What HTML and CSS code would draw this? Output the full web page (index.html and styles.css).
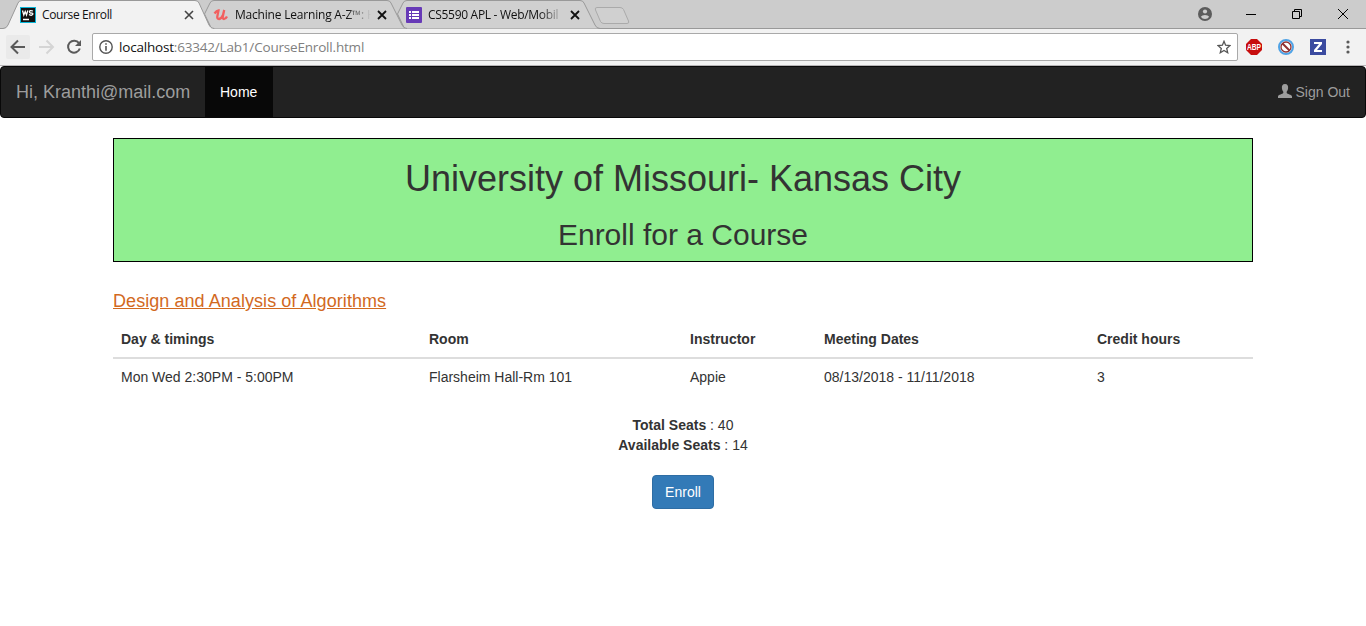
FILE: index.html
```html
<!DOCTYPE html>
<html lang="en">
<head>
<meta charset="utf-8">
<title>Course Enroll</title>
<link rel="stylesheet" href="styles.css">
</head>
<body>
<header class="browser">
  <div class="tabstrip">
    <svg class="tab-shapes" width="1366" height="29" viewBox="0 0 1366 29">
      <path class="strip-line" d="M0 28.5H1366"/>
      <path class="tab-back" d="M404.500 28.500L397.500 14L403 3Q404 .5 407 .5H580Q583 .5 584 3L595 25Q596.500 28.500 600 28.500"/>
      <path class="tab-back" d="M211.500 28.500L204.500 14L210 3Q211 .5 214 .5H387Q390 .5 391 3L402 25Q403.500 28.500 407 28.500"/>
      <path class="tab-front" d="M0 28.500H3Q6.500 28.500 8 25L18 3Q19 .5 22 .5H195Q198 .5 199 3L209 25Q210.500 28.500 214 28.500V30H0Z"/>
      <path class="tab-cover" d="M7 28.500H211"/>
      <path class="new-tab" d="M597 7.500H620Q622.500 7.500 623.500 9.500L628.500 21Q629.500 23.500 627 23.500H604Q601.500 23.500 600.500 21.500L595.500 10Q594.500 7.500 597 7.500Z"/>
    </svg>
    <div class="tab">
      <svg class="favicon" width="16" height="16" viewBox="0 0 16 16"><rect width="16" height="16" fill="#08b5d7"/><rect x="1" y="1" width="14" height="14" fill="#111"/><path d="M2.500 3.500L3.800 8L5.200 4.500L6.500 8L7.800 3.500M13 4Q9.500 3 9.500 4.700T12 6Q13.500 6.500 12.500 7.700T9 7.500M3 12.500H9" fill="none" stroke="#fff" stroke-width="1.300"/></svg>
      <span class="tab-title t1">Course Enroll</span>
      <svg class="tab-close soft" width="10" height="10" viewBox="0 0 10 10"><path d="M1 1L9 9M9 1L1 9"/></svg>
    </div>
    <div class="tab">
      <svg class="favicon" width="16" height="16" viewBox="0 0 16 16"><path d="M1.500 6.500Q3.500 3.500 5.500 3.500L4.300 9.500Q4 12 6 12Q8.500 11.500 10 8L11.200 3L9.800 9.500Q9.300 12 11 12Q13 11.500 14 9.500" fill="none" stroke="#f2605f" stroke-width="2.300"/></svg>
      <span class="tab-title t2">Machine Learning A-Z™: H</span>
      <svg class="tab-close" width="10" height="10" viewBox="0 0 10 10"><path d="M1 1L9 9M9 1L1 9"/></svg>
    </div>
    <div class="tab">
      <svg class="favicon" width="16" height="16" viewBox="0 0 16 16"><rect width="16" height="16" rx="1" fill="#673ab7"/><path d="M3 5H5M3 8H5M3 11H5M6 5H13M6 8H13M6 11H13" stroke="#fff" stroke-width="2"/></svg>
      <span class="tab-title t3">CS5590 APL - Web/Mobil</span>
      <svg class="tab-close" width="10" height="10" viewBox="0 0 10 10"><path d="M1 1L9 9M9 1L1 9"/></svg>
    </div>
    <div class="window-controls">
      <svg width="14" height="14" viewBox="0 0 14 14"><circle cx="7" cy="7" r="7" fill="#5c5c5c"/><circle cx="7" cy="4.500" r="2.100" fill="#ccc"/><path d="M2.800 9.800Q4 7.900 7 7.900T11.200 9.800Q9.800 12 7 12T2.800 9.800Z" fill="#ccc"/></svg>
      <svg width="10" height="10" viewBox="0 0 10 10"><path class="wc" d="M0 5.500H10"/></svg>
      <svg width="10" height="10" viewBox="0 0 10 10"><path class="wc" d="M.5 2.500H7.500V9.500H.5ZM2.500 2.500V.5H9.500V7.500H7.500"/></svg>
      <svg width="10" height="10" viewBox="0 0 10 10"><path class="wc" d="M0 0L10 10M10 0L0 10"/></svg>
    </div>
  </div>
  <div class="toolbar">
    <div class="nav-buttons">
      <span class="back"><svg width="24" height="24" viewBox="0 0 24 24"><path d="M19 12H6M12 5.500L5.500 12L12 18.500" fill="none" stroke="#5a5a5a" stroke-width="2"/></svg></span>
      <svg class="forward" width="24" height="24" viewBox="0 0 24 24"><path d="M5 12H18M12.500 5.500L19 12L12.500 18.500" fill="none" stroke="#d5d5d5" stroke-width="2"/></svg>
      <svg class="reload" width="16" height="16" viewBox="0 0 16 16"><path d="M13 4.200A6 6 0 1 0 13.800 9.500" fill="none" stroke="#5a5a5a" stroke-width="2"/><path d="M15 1V7H9Z" fill="#5a5a5a"/></svg>
    </div>
    <div class="omnibox">
      <svg width="14" height="14" viewBox="0 0 14 14"><circle cx="7" cy="7" r="6.200" fill="none" stroke="#555" stroke-width="1.400"/><path d="M7 3.200V4.800M7 6V10.700" stroke="#555" stroke-width="1.600"/></svg>
      <span class="url"><b>localhost</b>:63342/Lab1/CourseEnroll.html</span>
      <svg class="star" width="14" height="14" viewBox="0 0 14 14"><path d="M7 1.300L8.600 5.200L13 5.600L9.700 8.400L10.700 12.700L7 10.400L3.300 12.700L4.300 8.400L1 5.600L5.400 5.200Z" fill="none" stroke="#555" stroke-width="1.300"/></svg>
    </div>
    <div class="extensions">
      <svg width="16" height="16" viewBox="0 0 16 16"><path d="M5 0H11L16 5V11L11 16H5L0 11V5Z" fill="#c70d0d"/><text class="abp" x="8" y="11.200" text-anchor="middle" textLength="14" lengthAdjust="spacingAndGlyphs">ABP</text></svg>
      <svg width="16" height="16" viewBox="0 0 16 16"><circle cx="8" cy="8" r="7" fill="#fff" stroke="#4fa3e6" stroke-width="2"/><circle cx="8" cy="8" r="5" fill="#fff" stroke="#8f3030" stroke-width="1.300"/><path d="M4.500 4.500L11.500 11.500" stroke="#8f3030" stroke-width="2"/></svg>
      <svg width="16" height="16" viewBox="0 0 16 16"><rect width="16" height="16" fill="#3b4ba0"/><path d="M4 3H12V5L7 11H12V13H4V11L9 5H4Z" fill="#fff"/></svg>
      <svg class="menu" width="4" height="14" viewBox="0 0 4 14"><circle cx="2" cy="2" r="1.600"/><circle cx="2" cy="7" r="1.600"/><circle cx="2" cy="12" r="1.600"/></svg>
    </div>
  </div>
</header>
<nav class="navbar">
  <span class="brand">Hi, Kranthi@mail.com</span>
  <a class="nav-item active">Home</a>
  <a class="nav-item sign-out"><svg width="14" height="14" viewBox="0 0 14 14"><path d="M7 0C9.500 0 10.300 1.700 10.100 4C10 5.800 9.300 6.800 8.700 7.700V9C9 10 13.900 10.500 14 12.500V14H0V12.500C.1 10.500 5 10 5.300 9V7.700C4.700 6.800 4 5.800 3.900 4C3.700 1.700 4.500 0 7 0Z" fill="#9d9d9d"/></svg>Sign Out</a>
</nav>
<main class="container">
  <section class="banner">
    <h1>University of Missouri- Kansas City</h1>
    <h2>Enroll for a Course</h2>
  </section>
  <h4 class="course"><u>Design and Analysis of Algorithms</u></h4>
  <table class="schedule">
    <colgroup><col class="c-day"><col class="c-room"><col class="c-inst"><col class="c-dates"><col></colgroup>
    <thead><tr><th>Day &amp; timings</th><th>Room</th><th>Instructor</th><th>Meeting Dates</th><th>Credit hours</th></tr></thead>
    <tbody><tr><td>Mon Wed 2:30PM - 5:00PM</td><td>Flarsheim Hall-Rm 101</td><td>Appie</td><td>08/13/2018 - 11/11/2018</td><td>3</td></tr></tbody>
  </table>
  <div class="seats">
    <div><b>Total Seats</b> : 40</div>
    <div><b>Available Seats</b> : 14</div>
    <button class="enroll">Enroll</button>
  </div>
</main>
</body>
</html>
```
FILE: styles.css
```css
* { box-sizing: border-box; }
body { margin: 0; background: #fff; color: #333; font: 14px/20px "Liberation Sans", Arial, sans-serif; overflow: hidden; }
svg { display: block; flex: none; }
.browser { font-family: "Open Sans", sans-serif; }
.tabstrip { position: relative; height: 29px; background: #ccc; display: flex; padding-left: 6px; }
.tab-shapes { position: absolute; left: 0; top: 0; }
.strip-line { stroke: #999; }
.tab-back { fill: #d0d0d0; stroke: #999; }
.tab-front { fill: #f2f2f2; stroke: #999; }
.tab-cover { stroke: #f2f2f2; stroke-width: 2; }
.new-tab { fill: #d0d0d0; stroke: #aaa; }
.tab { position: relative; width: 193px; height: 29px; padding: 0 4px 0 14px; display: flex; align-items: center; }
.tab-title { width: 142px; margin-left: 6px; font-size: 12px; line-height: 16px; color: #111; white-space: nowrap; }
.t1 { letter-spacing: -.37px; }
.t2 { letter-spacing: -.2px; -webkit-mask-image: linear-gradient(90deg, #000 112px, transparent 136px); mask-image: linear-gradient(90deg, #000 112px, transparent 136px); }
.t3 { letter-spacing: -.3px; -webkit-mask-image: linear-gradient(90deg, #000 112px, transparent 136px); mask-image: linear-gradient(90deg, #000 112px, transparent 136px); }
.tab-close { fill: none; stroke: #111; stroke-width: 1.8; }
.soft { stroke: #444; stroke-width: 1.6; }
.window-controls { position: relative; margin-left: auto; padding-right: 18px; display: flex; align-items: center; gap: 36px; height: 27px; }
.window-controls svg:first-child { margin-right: -2px; }
.wc { fill: none; stroke: #000; }
.toolbar { height: 37px; background: #f2f2f2; border-bottom: 1px solid #b6b4b6; display: flex; align-items: flex-start; padding: 4px 15px 0 6px; }
.nav-buttons { width: 86px; height: 28px; display: flex; align-items: center; }
.back { width: 24px; height: 24px; background: #eaeaea; border-radius: 2px; }
.forward { margin-left: 4px; }
.reload { margin-left: 8px; }
.omnibox { width: 1146px; height: 28px; border: 1px solid #a9a9a9; border-radius: 2px; background: #fff; display: flex; align-items: center; padding: 0 6px; }
.url { margin-left: 6px; font-size: 13.5px; line-height: 20px; color: #808080; letter-spacing: -.19px; white-space: nowrap; }
.url b { font-weight: 400; color: #111; }
.star { margin-left: auto; }
.extensions { height: 28px; margin-left: 8px; display: flex; align-items: center; gap: 16px; }
.abp { fill: #fff; font: bold 9px "Liberation Sans", Arial, sans-serif; }
.menu { margin-left: 4px; fill: #5a5a5a; }
.navbar { height: 52px; background: #222; border: 1px solid #080808; border-radius: 4px; display: flex; }
.brand { width: 204px; padding-left: 15px; font-size: 18px; line-height: 50px; color: #9d9d9d; white-space: nowrap; }
.nav-item { padding: 15px; color: #9d9d9d; display: flex; }
.active { width: 68px; color: #fff; background: #080808; }
.sign-out { margin-left: auto; gap: 4px; }
.sign-out svg { margin-top: 2px; }
.container { width: 1140px; margin: 20px auto 0; }
.banner { height: 124px; border: 1px solid #000; background: #90ee90; text-align: center; padding-top: 20px; }
h1, h2, h4 { font-weight: 400; line-height: 1.1; margin: 0; }
h1 { font-size: 36px; }
h2 { font-size: 30px; margin-top: 19px; }
.course { margin-top: 30px; font-size: 18px; letter-spacing: .06px; color: #d2691e; }
.schedule { width: 100%; margin-top: 9px; table-layout: fixed; border-collapse: collapse; text-align: left; }
.schedule th, .schedule td { padding: 8px; }
.schedule th { border-bottom: 2px solid #ddd; }
.c-day { width: 308px; }
.c-room { width: 261px; }
.c-inst { width: 134px; }
.c-dates { width: 273px; }
.seats { margin-top: 20px; text-align: center; }
.enroll { margin-top: 20px; width: 62px; height: 34px; padding: 6px 0; color: #fff; background: #337ab7; border: 1px solid #2e6da4; border-radius: 4px; font: inherit; }
```
